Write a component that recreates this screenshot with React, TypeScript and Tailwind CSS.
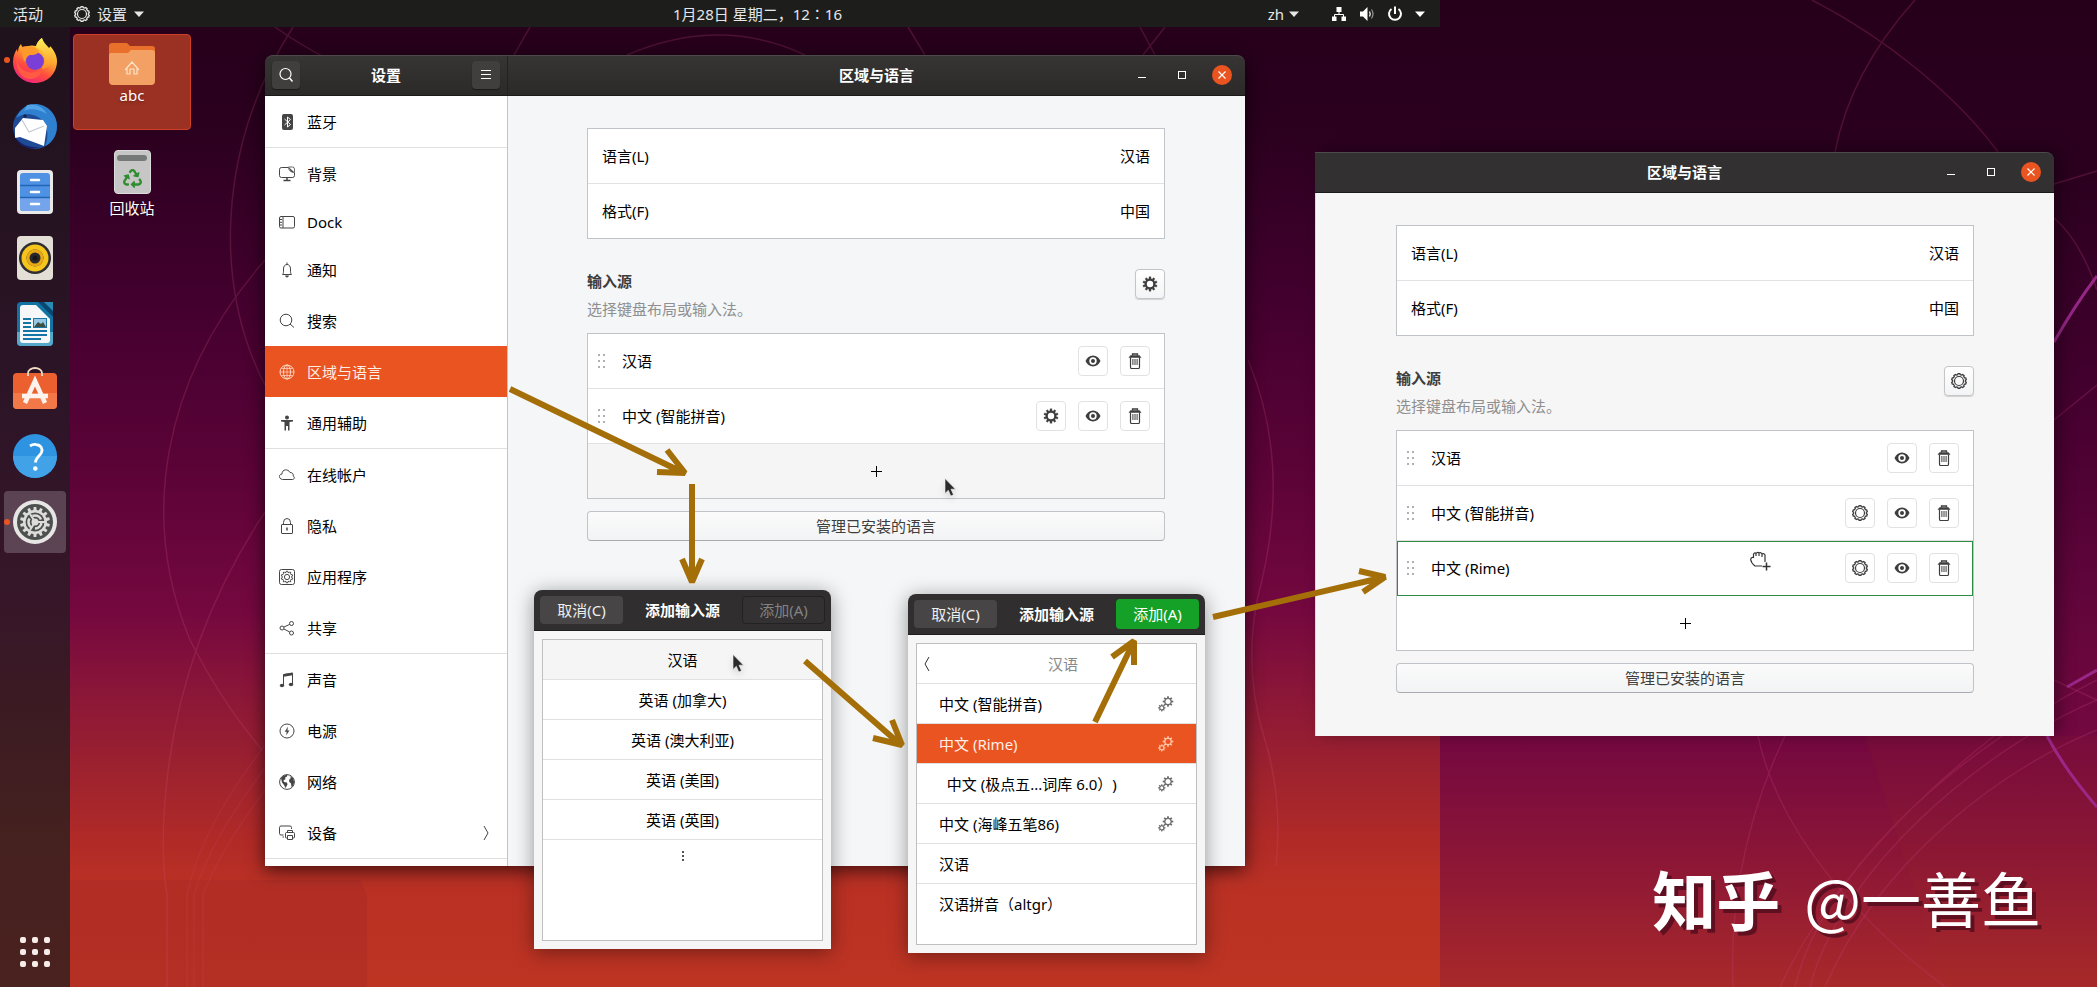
import React from 'react';
import { FaRecycle } from 'react-icons/fa';

// Outline of a cog: `teeth` square-ish teeth between the root radius and the tip radius
const cog = (cx: number, cy: number, teeth: number, tip: number, root: number) => {
  const step = (Math.PI * 2) / teeth;
  const points: string[] = [];
  for (let i = 0; i < teeth; i++) {
    [
      [-0.3, root],
      [-0.2, tip],
      [0.2, tip],
      [0.3, root],
    ].forEach(([offset, r]) => {
      const a = (i + offset) * step - Math.PI / 2;
      points.push(`${(cx + r * Math.cos(a)).toFixed(2)} ${(cy + r * Math.sin(a)).toFixed(2)}`);
    });
  }
  return `M${points.join('L')}Z`;
};

const Icon = ({ children, className = 'w-4 h-4' }: { children: React.ReactNode; className?: string }) => (
  <svg viewBox="0 0 16 16" className={`shrink-0 ${className}`} fill="none" stroke="currentColor" strokeWidth="1" aria-hidden="true">
    {children}
  </svg>
);

const GearOutline = () => (
  <Icon>
    <path d={cog(8, 8, 10, 7.4, 6.5)} strokeWidth="1.300" />
    <circle cx="8" cy="8" r="4.500" strokeWidth="1.200" />
  </Icon>
);

const GearSolid = () => (
  <Icon>
    <path d={cog(8, 8, 10, 7.2, 5.3)} fill="currentColor" strokeWidth="0.400" />
    <circle cx="8" cy="8" r="3.200" className="fill-white" stroke="none" />
  </Icon>
);

const Eye = () => (
  <Icon>
    <path d="M0.500 8C2 4.600 4.700 2.500 8 2.500s6 2.100 7.500 5.500C14 11.400 11.300 13.500 8 13.500S2 11.400 0.500 8z" fill="currentColor" stroke="none" />
    <circle cx="8" cy="8" r="3.700" className="fill-white" stroke="none" />
    <circle cx="8" cy="8" r="2" fill="currentColor" stroke="none" />
  </Icon>
);

const Trash = () => (
  <Icon>
    <path d="M5.500 2.500v-1.500h5v1.500" strokeWidth="1.300" />
    <path d="M1.500 4.800L3.500 2.200h9l2 2.600z" fill="currentColor" stroke="none" />
    <path d="M3.500 4.500v9.500q0 1.500 1 1.500h7q1 0 1-1.500V4.500" strokeWidth="1.200" />
    <path d="M5.900 6v6M8 6v6M10.100 6v6" />
  </Icon>
);

const Gears = () => (
  <Icon>
    <path d={cog(10, 5.5, 8, 5.4, 3.8)} fill="currentColor" stroke="none" />
    <circle cx="10" cy="5.500" r="2.500" stroke="none" className="fill-white group-aria-selected:fill-[#e95420]" />
    <path d={cog(3.8, 11.8, 8, 3.7, 2.7)} fill="currentColor" stroke="none" />
    <circle cx="3.800" cy="11.800" r="1.500" stroke="none" className="fill-white group-aria-selected:fill-[#e95420]" />
  </Icon>
);

const Caret = () => (
  <svg viewBox="0 0 10 6" className="w-2.5 h-1.5" fill="currentColor" aria-hidden="true">
    <path d="M0 0.500h10L5 6z" />
  </svg>
);

const sidebarItems: { label: string; icon: React.ReactNode; active?: boolean; divider?: boolean; compact?: boolean; more?: boolean }[] = [
  {
    label: '蓝牙',
    divider: true,
    icon: (
      <Icon>
        <rect x="3" y="0" width="11" height="16" rx="2" fill="currentColor" stroke="none" />
        <path d="M5.500 5l6 5.500-3 2.500V3l3 2.500-6 5.500" stroke="white" />
      </Icon>
    ),
  },
  {
    label: '背景',
    icon: (
      <Icon>
        <path d="M9 1.500H2.500q-2 0-2 2v6q0 2 2 2h11q2 0 2-2V7" />
        <path d="M9.500 1q0 5 6 5.500V3q0-2-2-2z" strokeWidth="0.800" />
        <path d="M9.500 1l6 5.500q-4.500 0-6-5.500z" fill="currentColor" stroke="none" />
        <path d="M8 11.500v3M4.500 14.500h7" strokeWidth="1.500" />
      </Icon>
    ),
  },
  {
    label: 'Dock',
    compact: true,
    icon: (
      <Icon>
        <rect x="0.500" y="2.500" width="15" height="11.500" rx="1.500" />
        <path d="M4 2.500V14M1 5.500h2M1 8.300h2M1 11h2" />
      </Icon>
    ),
  },
  {
    label: '通知',
    icon: (
      <Icon>
        <path d="M3.500 12.500h9c-1-1-1-2-1-5.500 0-3-1.500-4.500-3.500-4.500S4.500 4 4.500 7c0 3.500 0 4.500-1 5.500zM8 2.500v-2" />
        <path d="M6 13.500h4q-.5 2-2 2t-2-2z" fill="currentColor" stroke="none" />
      </Icon>
    ),
  },
  {
    label: '搜索',
    icon: (
      <Icon>
        <circle cx="7" cy="7" r="5.800" />
        <path d="M11 11l4 3.500" />
      </Icon>
    ),
  },
  {
    label: '区域与语言',
    active: true,
    icon: (
      <Icon>
        <circle cx="8" cy="8" r="7" />
        <ellipse cx="8" cy="8" rx="3.500" ry="7" />
        <path d="M8 1v14M1 8h14M2.500 4.500h11M2.500 11.500h11" strokeWidth="0.700" />
      </Icon>
    ),
  },
  {
    label: '通用辅助',
    divider: true,
    icon: (
      <Icon>
        <g fill="currentColor" stroke="none">
          <circle cx="8" cy="2.500" r="2" />
          <path d="M2 5h12v1.500l-3.500 0.500v8.500H9V11H7v4.500H5.500V7L2 6.500z" />
        </g>
      </Icon>
    ),
  },
  {
    label: '在线帐户',
    icon: (
      <Icon>
        <path d="M3.500 12.500c-4-0.500-4-5.500-0.500-5.500C3 2 9 1.500 11 5.500c3 0 3.500 2 3.200 3.500 1.800 1 1.300 3.500-0.700 3.500z" />
      </Icon>
    ),
  },
  {
    label: '隐私',
    icon: (
      <Icon>
        <rect x="2.500" y="6.500" width="11" height="9" rx="0.500" />
        <path d="M4.500 6.500V4.500a3.500 4 0 0 1 7 0v2" />
        <path d="M8 9.500v3" strokeWidth="1.500" />
      </Icon>
    ),
  },
  {
    label: '应用程序',
    icon: (
      <Icon>
        <rect x="0.500" y="0.500" width="15" height="15" rx="2" />
        <path d={cog(8, 8, 10, 5.8, 4.7)} />
        <circle cx="8" cy="8" r="2.600" />
      </Icon>
    ),
  },
  {
    label: '共享',
    divider: true,
    icon: (
      <Icon>
        <circle cx="3" cy="8" r="2" />
        <circle cx="12.500" cy="3.500" r="2" />
        <circle cx="12.500" cy="13" r="2" />
        <path d="M5 7l5.700-2.600M5 9l5.700 3" />
      </Icon>
    ),
  },
  {
    label: '声音',
    icon: (
      <Icon>
        <path d="M4.500 13V2.500l9-1.500v11" />
        <path d="M4.500 3.500l9-1.500" strokeWidth="2.500" />
        <ellipse cx="3" cy="13.500" rx="2.200" ry="1.800" fill="currentColor" stroke="none" />
        <ellipse cx="12" cy="12.500" rx="2.200" ry="1.800" fill="currentColor" stroke="none" />
      </Icon>
    ),
  },
  {
    label: '电源',
    icon: (
      <Icon>
        <circle cx="8" cy="8" r="7" />
        <path d="M9 3.500L5.700 8.700h2L7.200 12.500l3.200-5h-2z" fill="currentColor" stroke="none" />
      </Icon>
    ),
  },
  {
    label: '网络',
    icon: (
      <Icon>
        <circle cx="8" cy="8" r="7.400" />
        <path
          d="M2 4C4 1.500 6 0.700 8.500 1L7.500 3 6 3.500 6.500 5 4.500 6.500 5 8l3 0.500 0.500 2L6.500 14 5 11 3 8.500zM10.500 2l3.500 2 1.200 4-1 3.500L12.500 13l-0.500-3.500L10 7.500l0.500-2.500 1.500-1z"
          fill="currentColor"
          stroke="none"
        />
      </Icon>
    ),
  },
  {
    label: '设备',
    divider: true,
    more: true,
    icon: (
      <Icon>
        <path d="M12.500 4V2.500q0-1.500-1.500-1.500H2Q0.500 1 0.500 2.500v6Q0.500 10 2 10h2.500M3.500 12H5" />
        <path d="M8.500 7.500V5.500h5v2M8.500 13h-1q-1 0-1-1V8.500q0-1 1-1h7q1 0 1 1V12q0 1-1 1h-1M8.500 10.500h5v4h-5z" />
      </Icon>
    ),
  },
];

const WindowControls = () => (
  <div className="flex items-center justify-end gap-5 pr-[13px] text-white">
    <button aria-label="最小化" className="w-5 h-5 grid place-items-center">
      <span className="w-2 h-px mt-1 bg-current" />
    </button>
    <button aria-label="最大化" className="w-5 h-5 grid place-items-center">
      <span className="w-2 h-2 border border-current" />
    </button>
    <button aria-label="关闭" className="w-5 h-5 rounded-full bg-[#e95420] grid place-items-center">
      <svg viewBox="0 0 8 8" className="w-2 h-2" stroke="currentColor" strokeWidth="1.200" aria-hidden="true">
        <path d="M0.500 0.500l7 7M7.500 0.500l-7 7" />
      </svg>
    </button>
  </div>
);

const ActionButton = ({ label, children }: { label: string; children: React.ReactNode }) => (
  <button aria-label={label} className="w-[30px] h-[30px] grid place-items-center bg-white border border-[#e2e2e2] rounded text-[#3d3d3d]">
    {children}
  </button>
);

const SourceRow = ({
  name,
  gear,
  selected,
}: {
  name: string;
  gear?: React.ReactNode;
  selected?: boolean;
}) => (
  <li className={`h-[55px] flex items-center pl-[9px] pr-[14px] ${selected ? 'outline outline-1 -outline-offset-1 outline-[#2f8a43]' : ''}`}>
    <svg viewBox="0 0 9 16" className="w-[9px] h-4 text-[#b0b0b0]" fill="currentColor" aria-hidden="true">
      {[1, 7, 13].map((y) => (
        <g key={y}>
          <rect x="1" y={y} width="2" height="2" />
          <rect x="6" y={y} width="2" height="2" />
        </g>
      ))}
    </svg>
    <span className="ml-4">{name}</span>
    <div className="ml-auto flex gap-3">
      {gear && <ActionButton label="选项">{gear}</ActionButton>}
      <ActionButton label="显示布局">
        <Eye />
      </ActionButton>
      <ActionButton label="移除">
        <Trash />
      </ActionButton>
    </div>
  </li>
);

const RegionPanel = ({
  sources,
  gear,
  hoverAdd,
  selected,
}: {
  sources: { name: string; options?: boolean }[];
  gear: React.ReactNode;
  hoverAdd?: boolean;
  selected?: string;
}) => (
  <div className="w-full max-w-[578px] mx-auto pt-8 text-black">
    <div className="bg-white border border-[#c0c4c8] divide-y divide-[#e2e2e2]">
      {[
        ['语言(L)', '汉语'],
        ['格式(F)', '中国'],
      ].map(([label, value]) => (
        <button key={label} className="w-full h-[54px] box-content max-w-full flex items-center">
          <span className="ml-[14px]">{label}</span>
          <span className="ml-auto mr-[14px]">{value}</span>
        </button>
      ))}
    </div>

    <div className="mt-7 flex justify-between items-start">
      <div>
        <h2 className="leading-7 font-bold text-[#3d3d3d]">输入源</h2>
        <p className="leading-[29px] text-[#8e8f90]">选择键盘布局或输入法。</p>
      </div>
      <button
        aria-label="输入源选项"
        className="w-[30px] h-[30px] mt-0.5 grid place-items-center rounded border border-[#c3c5c7] shadow-[0_1px_1px_rgba(0,0,0,0.15)] bg-linear-to-b from-white to-[#f3f4f5] text-[#3d3d3d]"
      >
        {gear}
      </button>
    </div>

    <ul className="mt-[9px] bg-white border border-[#c0c4c8] divide-y divide-[#e2e2e2]">
      {sources.map((s) => (
        <SourceRow key={s.name} name={s.name} gear={s.options && gear} selected={s.name === selected} />
      ))}
      <li>
        <button aria-label="添加输入源" className={`w-full h-[54px] grid place-items-center ${hoverAdd ? 'bg-[#f5f5f5]' : ''}`}>
          <svg viewBox="0 0 11 11" className="w-[11px] h-[11px]" stroke="currentColor" aria-hidden="true">
            <path d="M5.500 0v11M0 5.500h11" />
          </svg>
        </button>
      </li>
    </ul>

    <button className="w-full h-[30px] mt-3 rounded border border-[#c0c4c8] border-b-[#a9adb1] bg-linear-to-b from-[#fbfbfb] to-[#f2f3f4] text-[#3d3d3d]">
      管理已安装的语言
    </button>
  </div>
);

const DialogHeader = ({ ready }: { ready?: boolean }) => (
  <header className="h-[41px] px-[6px] flex items-center justify-between rounded-t-lg bg-[#302e2e] border-b border-[#1f1e1e] text-white">
    <button className="w-[83px] h-7 rounded bg-[#474545] text-[#eeeeee]">取消(C)</button>
    <h2 className="font-bold">添加输入源</h2>
    {ready ? (
      <button className="w-[83px] h-[30px] rounded bg-[#15a127]">添加(A)</button>
    ) : (
      <button disabled className="w-[83px] h-7 rounded border border-[#232222] bg-[#333131] text-[#838383]">
        添加(A)
      </button>
    )}
  </header>
);

const dockApps: { name: string; icon: React.ReactNode; running?: boolean; focused?: boolean }[] = [
  {
    name: 'Firefox',
    running: true,
    icon: (
      <>
        <defs>
          <linearGradient id="fox" x1="0.800" y1="0" x2="0.300" y2="1">
            <stop offset="0" stopColor="#fff04a" />
            <stop offset="0.400" stopColor="#ffa82e" />
            <stop offset="0.700" stopColor="#ff4a3f" />
            <stop offset="1" stopColor="#f0257e" />
          </linearGradient>
          <linearGradient id="foxTail" x1="0" y1="0" x2="0" y2="1">
            <stop offset="0" stopColor="#fff25a" />
            <stop offset="1" stopColor="#ff9226" />
          </linearGradient>
        </defs>
        <path d="M8 6c1 3 2 4 3 4 5-3 8-3 12-2 1-4 4-7 6-8 0 4 3 7 6 10 2 0 2-1 2-2 4 4 7 10 7 15 0 13-10 22-22 22S0 36 0 24C0 18 2 14 4 11c0 2 1 3 1 3C5 11 6 8 8 6z" fill="url(#fox)" />
        <circle cx="22" cy="23" r="9" fill="#7a3fd6" />
        <path d="M9 9c5-2 11-1 15 2l2 2c-1 3-4 4-8 4-3 0-5 2-6 7-4-6-2-10-3-15z" fill="#ff9a2a" />
        <path d="M29 0c-4 3-6 6-6 10 5 1 9 5 9 12 0 4-2 7-4 9 8-1 12-6 12-13 0-8-8-9-11-18z" fill="url(#foxTail)" />
        <path d="M4 18c0 14 10 18 19 16 3-1 5-3 6-5 1 8-6 12-13 12C7 40 2 30 4 18z" fill="#ff5a42" />
      </>
    ),
  },
  {
    name: 'Thunderbird',
    icon: (
      <>
        <circle cx="22" cy="23" r="22" fill="#1f4a96" />
        <path d="M3 14C8 4 14 0 22 0c12 0 22 10 22 22 0 9-5 17-12 20 4-8 3-19-2-25C23 9 11 8 3 14z" fill="#2f80cf" />
        <path d="M14 1c8-2 16 2 20 9-8-5-17-6-23-3z" fill="#4fa3e6" />
        <path d="M2 24l8-10 20 2 4 6-3 20-24-9-5 1z" fill="#fff" />
        <path d="M9 16l7 12 15-6" fill="none" stroke="#c3c9d2" strokeWidth="1.200" />
        <path d="M2 33c6 8 14 11 25 10C16 47 5 42 2 33z" fill="#16206a" />
        <circle cx="12" cy="12" r="1.800" fill="#12284f" />
      </>
    ),
  },
  {
    name: '文件',
    icon: (
      <>
        <rect x="4" y="0" width="36" height="44" rx="4" fill="#e9e9ea" />
        <rect x="7" y="3" width="30" height="38" rx="3" fill="#4f92e4" />
        <path d="M7 28h30v10q0 3-3 3H10q-3 0-3-3z" fill="#74a5ec" />
        <path d="M7 15.500h30M7 27.500h30" stroke="#2264b5" strokeWidth="1.300" />
        <path d="M18 10h8M18 22h8M18 34h8" stroke="#fff" strokeWidth="2.500" strokeLinecap="round" />
      </>
    ),
  },
  {
    name: 'Rhythmbox',
    icon: (
      <>
        <rect x="4" y="0" width="36" height="44" rx="4" fill="#e3ded6" />
        <circle cx="22" cy="22" r="16" fill="#2f2f33" />
        <circle cx="22" cy="22" r="11" fill="none" stroke="#f6c51d" strokeWidth="5" />
        <circle cx="22" cy="22" r="8.500" fill="#e9a917" />
        <circle cx="22" cy="22" r="5.500" fill="#2a2a2e" />
        <circle cx="22" cy="22" r="2.500" fill="#17171a" />
      </>
    ),
  },
  {
    name: 'LibreOffice Writer',
    icon: (
      <>
        <path d="M8 0h32v40q0 4-4 4H8q-4 0-4-4V4q0-4 4-4z" fill="#1272a4" />
        <path d="M4 30h36v10q0 4-4 4H8q-4 0-4-4z" fill="#56a8c8" />
        <path d="M10 3h13l14 14v21q0 3-3 3H10q-3 0-3-3V6q0-3 3-3z" fill="#f5f7f8" />
        <path d="M25 0h15v15z" fill="#0a4770" />
        <path d="M31 0h9v9z" fill="#278bb5" />
        <path d="M10 17h8M10 21h8M10 25h8M10 29h24M10 33h24M10 37h18" stroke="#1474a6" strokeWidth="1.800" />
        <rect x="20" y="16" width="14" height="10" fill="#1d76a6" />
        <rect x="21" y="17" width="12" height="8" fill="#96c8e4" />
        <path d="M21 25l4-5 3 2 2-2 3 5z" fill="#3b5142" />
      </>
    ),
  },
  {
    name: 'Ubuntu 软件',
    icon: (
      <>
        <rect x="0" y="5" width="44" height="36" rx="4" fill="#ec6030" />
        <path d="M0 25h44v12q0 4-4 4H4q-4 0-4-4z" fill="#f27848" />
        <path d="M15 8V5a7 5 0 0 1 14 0v3" fill="none" stroke="#f3dac5" strokeWidth="1.800" />
        <path d="M12 35L22 13l10 22M9 28h26" fill="none" stroke="#fdf3ec" strokeWidth="4.500" />
      </>
    ),
  },
  {
    name: '帮助',
    icon: (
      <>
        <circle cx="22" cy="22" r="22" fill="#2e93e0" />
        <path d="M0 22a22 22 0 0 0 44 0z" fill="#41a2e8" />
        <path d="M17 12q3-2 6-1.500c5 .5 7 4 5.500 8-1.500 3.500-6 5-6 10" fill="none" stroke="#fff" strokeWidth="2.800" />
        <circle cx="22.300" cy="34.500" r="2.300" fill="#fff" />
      </>
    ),
  },
  {
    name: '设置',
    running: true,
    focused: true,
    icon: (
      <>
        <circle cx="22" cy="22" r="22" fill="#e8e6e5" />
        <circle cx="22" cy="22" r="18" fill="#4c504f" />
        <path d={cog(22, 22, 14, 15, 12)} fill="#dddcdb" />
        <circle cx="22" cy="22" r="9.500" fill="#4c504f" />
        <circle cx="22" cy="22" r="6.500" fill="none" stroke="#dddcdb" strokeWidth="2.500" strokeDasharray="10 3.600" />
        <circle cx="22" cy="22" r="3.500" fill="#dddcdb" />
        <path d="M22 22h10M22 22l-5-8M22 22l-5 8" stroke="#dddcdb" strokeWidth="2" />
      </>
    ),
  },
];

const Pointer = ({ className }: { className: string }) => (
  <svg viewBox="0 0 12 19" className={`absolute w-3 h-[19px] drop-shadow-md ${className}`} aria-hidden="true">
    <path d="M1 0.500v15l3.300-3.200 2.500 5.700 2.700-1.200-2.500-5.600h4.500z" fill="#2b2b2b" stroke="#f4f4f4" strokeWidth="0.600" />
  </svg>
);

const arrows = [
  'M510 389L684 473M667 450L685 473L657 472',
  'M692 484V581M682 559L692 582L702 559',
  'M805 661L901 745M892 720L902 745L873 738',
  'M1095 722L1134 641M1112 657L1134 641L1134 665',
  'M1213 617L1385 577M1359 571L1385 577L1363 592',
];

const englishLayouts = ['英语 (加拿大)', '英语 (澳大利亚)', '英语 (美国)', '英语 (英国)'];

const chineseSources = [
  { name: '中文 (智能拼音)', engine: true },
  { name: '中文 (Rime)', engine: true, selected: true },
  { name: '\u00a0\u00a0中文 (极点五...词库 6.0）)', engine: true },
  { name: '中文 (海峰五笔86)', engine: true },
  { name: '汉语' },
  { name: '汉语拼音（altgr）' },
];

export default function App() {
  return (
    <div
      lang="zh-CN"
      className="relative min-h-screen w-full overflow-hidden flex text-[15px] leading-5 font-['Noto_Sans','Noto_Sans_CJK_SC',sans-serif] [text-spacing-trim:space-all] bg-[linear-gradient(180deg,#26001b_0%,#2b001f_18%,#44002f_40%,#60053b_60%,#740840_75%,#8b1636_87%,#a9292a_100%)]"
    >
      {/* Second screen wallpaper */}
      <svg viewBox="0 0 657 987" className="absolute top-0 left-[1440px] w-[657px] h-[987px]" fill="none" stroke="#c8407a" strokeOpacity="0.250" strokeWidth="1.500" aria-hidden="true">
        <path d="M425 736L505 987H657V736z" fill="#a03020" fillOpacity="0.100" stroke="none" />
        <path d="M372 0C450 40 520 100 558 152M475 0C430 50 405 100 395 152" />
        <path d="M614 184L657 171M614 218Q640 240 657 290M614 420L657 385" />
        <path d="M318 736C340 840 430 930 505 987M345 736C300 830 290 920 293 987" />
        <path d="M657 680C500 760 380 880 355 987M657 700C540 750 400 870 370 987M657 730C560 770 440 860 385 987M554 736C460 810 380 900 340 987" />
        <path d="M614 680L657 700" />
        <path d="M614 342Q635 305 657 276M627 687L657 670M607 736Q625 770 657 807" stroke="#a02a90" strokeOpacity="0.900" strokeWidth="3" />
      </svg>

      {/* Main screen */}
      <div className="relative w-[1440px] min-h-screen flex flex-col bg-[linear-gradient(180deg,#26001b_0%,#2a001e_12%,#42002e_30%,#5c0338_48%,#74083f_62%,#8a1638_70%,#9d222f_78%,#b02a27_85%,#ba3124_90%,#bd3423_100%)]">
        <svg viewBox="0 0 1440 987" className="absolute top-0 left-0 w-[1440px] h-[987px]" fill="none" stroke="#d0507a" strokeOpacity="0.220" strokeWidth="1.500" aria-hidden="true">
          <path d="M70 880H360L367 895V987H70z" fill="#a02828" fillOpacity="0.300" stroke="none" />
          <path d="M293 27C215 150 215 290 265 385M275 27Q300 45 330 60M265 260C160 380 140 520 190 640Q220 700 262 750M265 512Q180 640 166 790Q160 850 167 895V987" />
          <path d="M265 745Q200 830 187 895V987M265 768Q210 840 194 895V987M265 790Q220 850 203 895V987" strokeOpacity="0.150" />
          <path d="M530 27L514 55M627 55Q720 15 805 55M908 27L925 55M1140 27L1155 55M1165 27L1143 55" />
          <path d="M1248 360Q1290 460 1262 580Q1240 660 1265 740Q1283 800 1276 866" />
        </svg>

        <header className="relative h-[27px] pl-[13px] pr-[15px] flex items-center bg-[#1d1d1c] text-[#e6e6e6]">
          <div className="w-[660px] flex items-center">
            <button>活动</button>
            <button className="ml-[31px] flex items-center gap-[7px]">
              <GearOutline />
              设置
              <Caret />
            </button>
          </div>
          <time>1月28日 星期二，12∶16</time>
          <div className="ml-auto flex items-center text-white">
            <button className="flex items-center gap-[5px] text-[#e6e6e6]">
              zh
              <Caret />
            </button>
            <button aria-label="系统菜单" className="ml-8 flex items-center gap-3">
              <Icon>
                <path d="M5.500 1h5v5h-5zM1 10.500h4.500v4.500H1zM10.500 10.500H15v4.500h-4.500z" fill="currentColor" stroke="none" />
                <path d="M8 5v3.500M3.500 11V8.500h9V11" />
              </Icon>
              <Icon>
                <path d="M1 5.500h3L8.500 1v14L4 10.500H1z" fill="currentColor" stroke="none" />
                <path d="M10.500 5.500q1.500 2.500 0 5" strokeWidth="1.300" />
                <path d="M12.500 3.500q3 4.500 0 9" strokeOpacity="0.500" strokeWidth="1.300" />
              </Icon>
              <Icon>
                <path d="M4.500 3a6 6 0 1 0 7 0M8 0.500V8" strokeWidth="2" />
              </Icon>
              <Caret />
            </button>
          </div>
        </header>

        <div className="relative flex-1 flex">
          <nav aria-label="Dock" className="w-[70px] pt-0.5 pb-5 flex flex-col items-center gap-1 bg-[linear-gradient(180deg,#1f121c_0%,#2b1426_35%,#371629_60%,#3c1b22_72%,#45211f_85%,#4a221f_100%)]">
            {dockApps.map((app) => (
              <button
                key={app.name}
                aria-label={app.name}
                className={`relative w-[62px] h-[62px] grid place-items-center rounded ${app.focused ? 'bg-white/20' : ''}`}
              >
                {app.running && <span className="absolute left-0 top-7 w-[6px] h-[6px] rounded-full bg-[#e95420]" />}
                <svg viewBox="0 0 44 44" className="w-11 h-11 overflow-visible" aria-hidden="true">
                  {app.icon}
                </svg>
              </button>
            ))}
            <button aria-label="显示应用程序" className="mt-auto grid grid-cols-3 gap-[6px]">
              {Array.from({ length: 9 }, (_, i) => (
                <span key={i} className="w-[6px] h-[6px] rounded-xs bg-[#f6ede9]" />
              ))}
            </button>
          </nav>

          <div className="pl-[3px] pt-[7px] flex flex-col gap-3 text-white text-center">
            <button className="w-[118px] h-24 pt-2 flex flex-col items-center rounded border border-[#cf4026] bg-[#9a3122]">
              <svg viewBox="0 0 46 42" className="w-[46px] h-[42px]" aria-hidden="true">
                <path d="M3 0h15l3 3h22q3 0 3 3v10H0V3q0-3 3-3z" fill="#e8702a" />
                <path d="M0 12q0-2 2-2h17l3-3h21q3 0 3 3v28q0 4-4 4H4q-4 0-4-4z" fill="#f3a064" />
                <path d="M16 27l7-8 7 8M18 25v6h3v-5h4v5h3v-6" fill="none" stroke="#fde3ca" strokeWidth="1.200" />
              </svg>
              <span className="text-shadow-md">abc</span>
            </button>
            <button className="w-[118px] h-24 pt-2 flex flex-col items-center">
              <span className="w-[37px] h-11 pt-1 flex flex-col items-center rounded bg-[#c6c6c6] border border-[#dcdcdc]">
                <span className="w-[30px] h-[6px] rounded-sm bg-[#757a78]" />
                <FaRecycle className="mt-2 w-[19px] h-[19px] text-[#2f8c2f]" />
              </span>
              <span className="mt-1 text-shadow-md">回收站</span>
            </button>
          </div>
        </div>
      </div>

      {/* Settings window */}
      <section aria-label="设置" className="absolute left-[265px] top-[55px] w-[980px] h-[811px] flex flex-col rounded-t-lg shadow-[0_4px_18px_rgba(0,0,0,0.65)]">
        <header className="h-[41px] shrink-0 flex rounded-t-lg border-t border-[#4c4a49] border-b border-b-[#1b1a1a] bg-linear-to-b from-[#373534] to-[#2c2a29] text-white">
          <div className="w-[243px] px-[7px] pb-px flex items-center justify-between border-r border-[#232221]">
            <button aria-label="搜索" className="w-7 h-7 grid place-items-center rounded bg-[#413f3e] shadow-[0_1px_1px_#1b1a1a]">
              <Icon>
                <circle cx="7.500" cy="7" r="5.500" strokeWidth="1.200" />
                <path d="M11.500 11l3 3.500" strokeWidth="1.500" />
              </Icon>
            </button>
            <h1 className="font-bold">设置</h1>
            <button aria-label="菜单" className="w-7 h-7 grid place-items-center rounded bg-[#413f3e] shadow-[0_1px_1px_#1b1a1a]">
              <Icon>
                <path d="M3 3.500h10M3 7.500h10M3 11.500h10" />
              </Icon>
            </button>
          </div>
          <div className="flex-1 pb-px grid grid-cols-[1fr_auto_1fr] items-center">
            <span />
            <h1 className="font-bold">区域与语言</h1>
            <WindowControls />
          </div>
        </header>

        <div className="flex-1 min-h-0 flex">
          <nav className="w-[243px] bg-white border-r border-[#c0c4c8] text-black">
            {sidebarItems.map((item) => (
              <a
                key={item.label}
                href="#"
                aria-current={item.active ? 'page' : undefined}
                className={`flex items-center px-[14px] ${item.compact ? 'h-[45px]' : item.divider ? 'h-[52px] border-b border-[#dfdfdf]' : 'h-[51px]'} ${
                  item.active ? 'bg-[#e95420] text-[#ffeee6]' : ''
                }`}
              >
                <span className={item.active ? 'text-[#ffd9c8]' : 'text-[#454545]'}>{item.icon}</span>
                <span className="ml-3">{item.label}</span>
                {item.more && (
                  <svg viewBox="0 0 6 16" className="ml-auto mr-1 w-[6px] h-4 text-[#454545]" fill="none" stroke="currentColor" aria-hidden="true">
                    <path d="M1 1l4 7-4 7" />
                  </svg>
                )}
              </a>
            ))}
          </nav>
          <main className="flex-1 pr-px bg-[#f4f6f7]">
            <RegionPanel sources={[{ name: '汉语' }, { name: '中文 (智能拼音)', options: true }]} gear={<GearSolid />} hoverAdd />
          </main>
        </div>
      </section>

      {/* Result window */}
      <section aria-label="区域与语言" className="absolute left-[1315px] top-[152px] w-[739px] h-[584px] flex flex-col rounded-tr-lg shadow-[6px_-2px_16px_rgba(0,0,0,0.35)]">
        <header className="h-[41px] shrink-0 pb-px grid grid-cols-[1fr_auto_1fr] items-center rounded-tr-lg border-t border-[#4c4a4b] border-b border-b-[#1b1a1a] bg-[#323031] text-white">
          <span />
          <h1 className="font-bold">区域与语言</h1>
          <WindowControls />
        </header>
        <main className="flex-1 border-l border-[#dadada] bg-[#f6f6f6]">
          <RegionPanel
            sources={[{ name: '汉语' }, { name: '中文 (智能拼音)', options: true }, { name: '中文 (Rime)', options: true }]}
            gear={<GearOutline />}
            selected="中文 (Rime)"
          />
        </main>
      </section>

      {/* Add source: pick a language */}
      <section role="dialog" aria-label="添加输入源" className="absolute left-[534px] top-[590px] w-[297px] h-[359px] flex flex-col rounded-t-lg shadow-[0_3px_20px_rgba(0,0,0,0.4)]">
        <DialogHeader />
        <div className="flex-1 p-2 bg-[#f6f6f6]">
          <ul className="h-full bg-white border border-[#bfbfbf] text-black">
            <li className="border-b border-[#e0e0e0]">
              <button className="w-full h-[39px] bg-[#f5f5f5]">汉语</button>
            </li>
            {englishLayouts.map((name) => (
              <li key={name} className="border-b border-[#e0e0e0]">
                <button className="w-full h-[39px]">{name}</button>
              </li>
            ))}
            <li>
              <button aria-label="更多" className="w-full h-8 grid place-items-center">
                <svg viewBox="0 0 2 10" className="w-[2px] h-[10px] text-[#555]" fill="currentColor" aria-hidden="true">
                  <path d="M0 0h2v2H0zM0 4h2v2H0zM0 8h2v2H0z" />
                </svg>
              </button>
            </li>
          </ul>
        </div>
      </section>

      {/* Add source: pick an input method */}
      <section role="dialog" aria-label="添加输入源" className="absolute left-[908px] top-[594px] w-[297px] h-[359px] flex flex-col rounded-t-lg shadow-[0_3px_20px_rgba(0,0,0,0.4)]">
        <DialogHeader ready />
        <div className="flex-1 p-2 bg-[#f6f6f6]">
          <div className="h-full bg-white border border-[#bfbfbf] text-black">
            <button className="w-full h-10 pl-[7px] flex items-center border-b border-[#e0e0e0]">
              <svg viewBox="0 0 6 16" className="w-[6px] h-4 text-[#333]" fill="none" stroke="currentColor" aria-hidden="true">
                <path d="M5 1L1 8l4 7" />
              </svg>
              <span className="flex-1 text-[#8a8a8a]">汉语</span>
            </button>
            <ul role="listbox" aria-label="汉语" className="divide-y divide-[#e0e0e0]">
              {chineseSources.map((s) => (
                <li
                  key={s.name}
                  role="option"
                  aria-selected={!!s.selected}
                  className="group h-10 px-[22px] flex items-center justify-between aria-selected:bg-[#e95420] aria-selected:text-[#ffeee6]"
                >
                  {s.name}
                  {s.engine && (
                    <span className="text-[#6b6b6b] group-aria-selected:text-[#ffc3a8]">
                      <Gears />
                    </span>
                  )}
                </li>
              ))}
            </ul>
          </div>
        </div>
      </section>

      {/* Step arrows drawn over the windows */}
      <svg viewBox="0 0 2097 987" className="absolute top-0 left-0 w-[2097px] h-[987px] pointer-events-none" fill="none" stroke="#a46f08" strokeWidth="6" strokeLinejoin="bevel" aria-hidden="true">
        {arrows.map((d) => (
          <path key={d} d={d} />
        ))}
      </svg>

      <Pointer className="left-[944px] top-[478px]" />
      <Pointer className="left-[732px] top-[654px]" />
      <svg viewBox="0 0 22 21" className="absolute left-[1750px] top-[551px] w-[22px] h-[21px]" fill="none" stroke="#333" strokeWidth="1.200" aria-hidden="true">
        <path d="M12 15H5Q1 12 0.700 8.500 1 6 3.500 6.500V3Q5 1 6 2.500 8 0.500 9 2 11 1 12 3q2-1 3 1v7M6 2.500V5M9 2.500V5M12 3v3" />
        <path d="M16.500 11.500v8M12.500 15.500h8" strokeWidth="1.500" />
      </svg>

      <p className="absolute right-14 bottom-12 flex items-center gap-6 font-['Noto_Sans_CJK_SC',sans-serif] text-[60px] leading-[84px] text-white [text-shadow:4px_4px_0_rgba(70,10,25,0.7)]">
        <span className="text-[64px] font-bold">知乎</span>
        <span>@一善鱼</span>
      </p>
    </div>
  );
}
